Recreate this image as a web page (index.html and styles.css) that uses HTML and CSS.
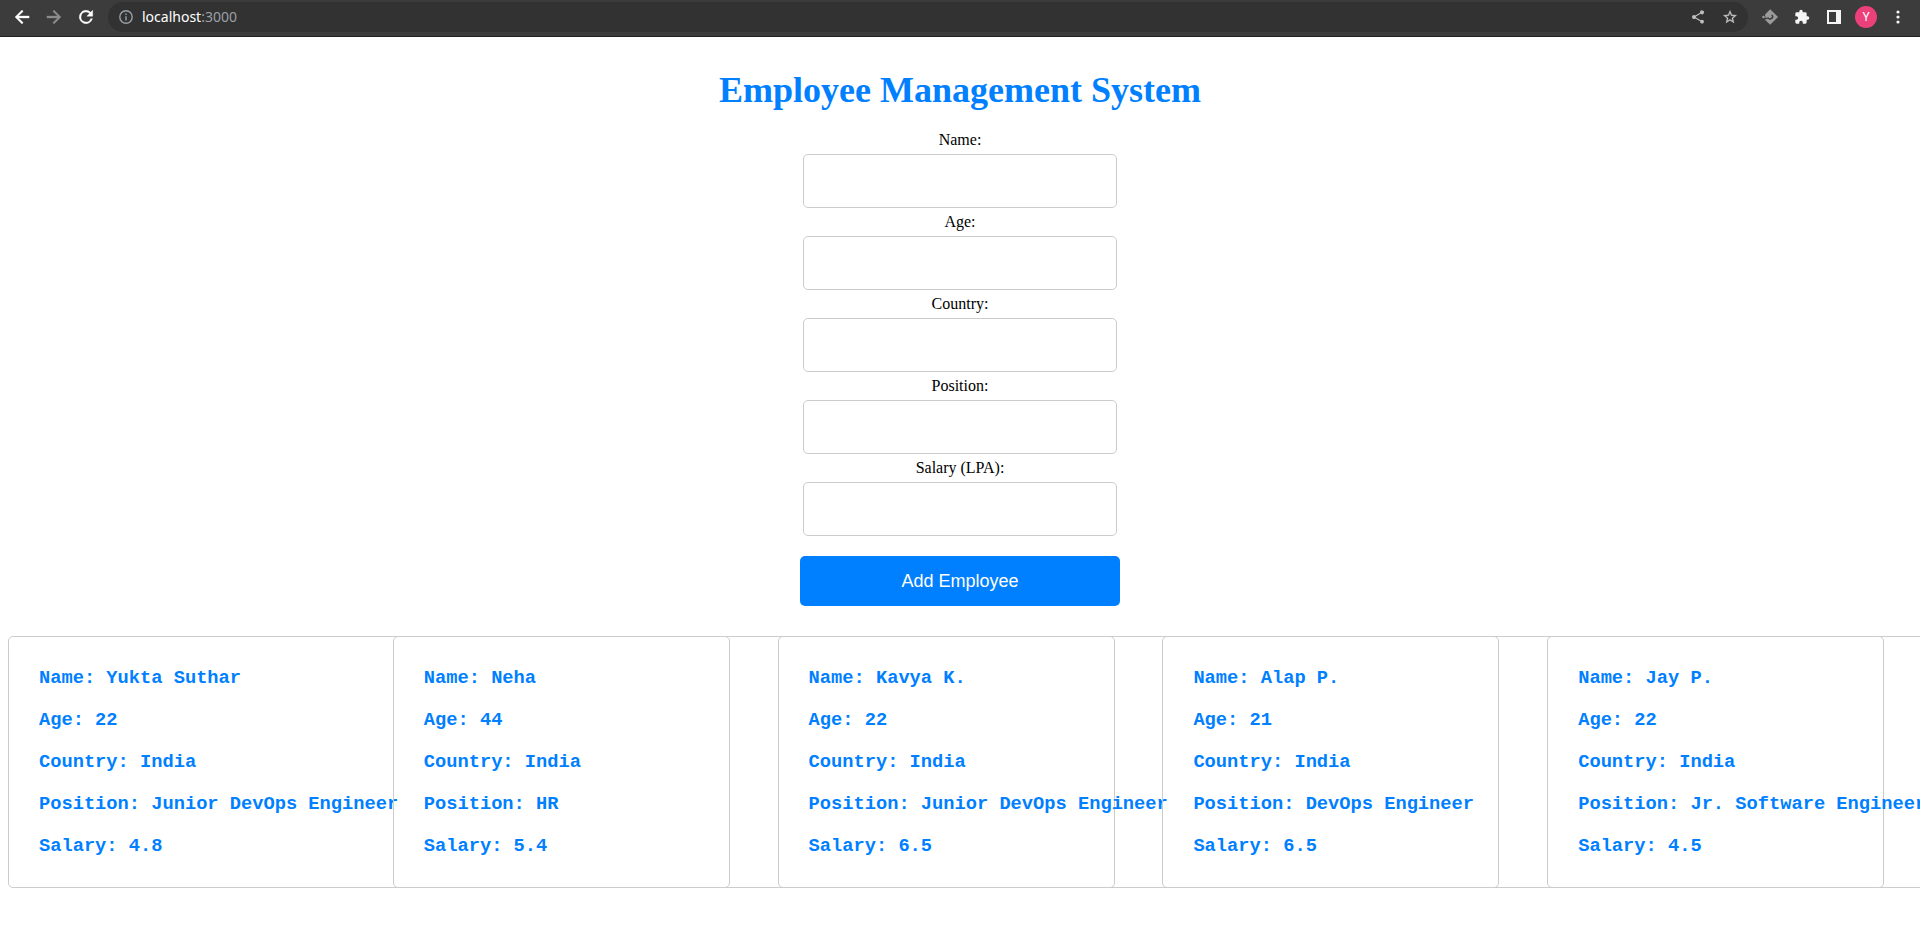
FILE: index.html
```html
<!DOCTYPE html>
<html lang="en">
<head>
<meta charset="utf-8">
<title>Employee Management System</title>
<link rel="stylesheet" href="styles.css">
</head>
<body>
<header class="toolbar">
  <button class="tool" aria-label="Back"><svg class="icon-lg" viewBox="0 0 24 24" fill="#fff"><path d="M20.500 10.800H7.800l5.600-5.500L12 3.600 3.600 12l8.400 8.400 1.400-1.700-5.600-5.500h12.700z" stroke="#fff" stroke-width=".4"/></svg></button>
  <button class="tool" aria-label="Forward"><svg class="icon-lg" viewBox="0 0 24 24" fill="#8c8c8c"><path d="M3.500 10.800h12.700l-5.600-5.500L12 3.600l8.400 8.400-8.400 8.400-1.400-1.700 5.600-5.500H3.500z" stroke="#8c8c8c" stroke-width=".4"/></svg></button>
  <button class="tool" aria-label="Reload"><svg class="icon-lg" viewBox="0 0 24 24" fill="#fff"><path d="M17.650 6.350A8 8 0 1 0 19.730 14h-2.080A6 6 0 1 1 12 6c1.660 0 3.140.69 4.220 1.780L13 11h7V4z" stroke="#fff" stroke-width=".5"/></svg></button>
  <div class="address">
    <svg class="icon-sm" viewBox="0 0 14 14" fill="none" stroke="#9aa0a6" stroke-width="1.400"><circle cx="7" cy="7" r="6.200"/><path d="M7 6.200v4.200M7 3.500v1.500"/></svg>
    <div class="url"><span class="host">localhost</span>:3000</div>
    <button class="tool" aria-label="Share"><svg class="icon-md" viewBox="0 0 24 24" fill="#bdbdbd"><path d="M18 16.080c-.76 0-1.440.3-1.960.77L8.910 12.700c.05-.23.09-.46.09-.7s-.04-.47-.09-.7l7.050-4.110A3 3 0 1 0 15 5c0 .24.04.47.09.7L8.040 9.810a3 3 0 1 0 0 4.380l7.120 4.160a2.920 2.920 0 1 0 2.840-2.270z"/></svg></button>
    <button class="tool" aria-label="Bookmark"><svg class="icon-md" viewBox="0 0 24 24" fill="#c4c4c4"><path d="M22 9.240l-7.190-.62L12 2 9.190 8.630 2 9.240l5.460 4.730L5.820 21 12 17.270 18.180 21l-1.630-7.030zM12 15.400l-3.760 2.270 1-4.280-3.320-2.880 4.380-.38L12 6.100l1.710 4.040 4.380.38-3.320 2.880 1 4.280z" stroke="#c4c4c4" stroke-width=".4"/></svg></button>
  </div>
  <button class="tool" aria-label="Extension"><svg class="icon-md" viewBox="0 0 16 16"><path fill="#9b9b9b" d="M8.200.2 16 8l-7.800 7.800L3 10.800V5.400z"/><path fill="none" stroke="#3c3c3c" stroke-width="1.500" d="M2.600 9.400h2.800M5.800 8.400c.4 1.300 1.400 1.700 2.500 1.500 1.600-.2 2.400-1.100 2.400-2.300 0-.8-.5-1.300-1.300-1.300M2.600 6.700v2.800"/><circle cx="1.500" cy="8" r="1.300" fill="#9b9b9b"/></svg></button>
  <button class="tool" aria-label="Extensions"><svg class="icon-md" viewBox="0 0 24 24" fill="#f5f5f5"><path d="M20.500 11H19V7a2 2 0 0 0-2-2h-4V3.500a2.500 2.500 0 0 0-5 0V5H4a2 2 0 0 0-2 2v3.800h1.500a2.700 2.700 0 0 1 0 5.400H2V20c0 1.100.9 2 2 2h3.800v-1.500a2.700 2.700 0 0 1 5.400 0V22H17a2 2 0 0 0 2-2v-4h1.500a2.500 2.500 0 0 0 0-5z"/></svg></button>
  <button class="tool" aria-label="Side panel"><svg class="icon-sm" viewBox="0 0 14 14"><path fill="#f5f5f5" fill-rule="evenodd" d="M0 0h14v14H0zM2 2v10h7V2z"/></svg></button>
  <button class="tool avatar" aria-label="Profile">Y</button>
  <button class="tool" aria-label="Menu"><svg class="icon-md" viewBox="0 0 16 16" fill="#f5f5f5"><circle cx="8" cy="3" r="1.600"/><circle cx="8" cy="8" r="1.600"/><circle cx="8" cy="13" r="1.600"/></svg></button>
</header>
<main class="page">
  <h1 class="title">Employee Management System</h1>
  <form class="form">
    <label class="label" for="name">Name:</label>
    <input class="field" id="name" type="text">
    <label class="label" for="age">Age:</label>
    <input class="field" id="age" type="text">
    <label class="label" for="country">Country:</label>
    <input class="field" id="country" type="text">
    <label class="label" for="position">Position:</label>
    <input class="field" id="position" type="text">
    <label class="label" for="salary">Salary (LPA):</label>
    <input class="field" id="salary" type="text">
    <button class="submit" type="button">Add Employee</button>
  </form>
  <section class="employees">
    <article class="card card-first">
      <h3 class="line">Name: Yukta Suthar</h3>
      <h3 class="line">Age: 22</h3>
      <h3 class="line">Country: India</h3>
      <h3 class="line">Position: Junior DevOps Engineer</h3>
      <h3 class="line">Salary: 4.8</h3>
    </article>
    <article class="card">
      <h3 class="line">Name: Neha</h3>
      <h3 class="line">Age: 44</h3>
      <h3 class="line">Country: India</h3>
      <h3 class="line">Position: HR</h3>
      <h3 class="line">Salary: 5.4</h3>
    </article>
    <article class="card">
      <h3 class="line">Name: Kavya K.</h3>
      <h3 class="line">Age: 22</h3>
      <h3 class="line">Country: India</h3>
      <h3 class="line">Position: Junior DevOps Engineer</h3>
      <h3 class="line">Salary: 6.5</h3>
    </article>
    <article class="card">
      <h3 class="line">Name: Alap P.</h3>
      <h3 class="line">Age: 21</h3>
      <h3 class="line">Country: India</h3>
      <h3 class="line">Position: DevOps Engineer</h3>
      <h3 class="line">Salary: 6.5</h3>
    </article>
    <article class="card">
      <h3 class="line">Name: Jay P.</h3>
      <h3 class="line">Age: 22</h3>
      <h3 class="line">Country: India</h3>
      <h3 class="line">Position: Jr. Software Engineer</h3>
      <h3 class="line">Salary: 4.5</h3>
    </article>
  </section>
</main>
</body>
</html>
```
FILE: styles.css
```css
* {
  box-sizing: border-box;
}

body {
  margin: 0;
  background: #fff;
  color: #000;
  font-family: "Liberation Serif", serif;
  font-size: 16px;
}

.toolbar {
  display: flex;
  align-items: center;
  height: 37px;
  padding: 0 6px 2px;
  background: #3c3c3c;
  border-bottom: 1px solid #202124;
}

.tool {
  display: flex;
  align-items: center;
  justify-content: center;
  flex: none;
  width: 32px;
  height: 30px;
  padding: 0;
  border: 0;
  background: none;
}

.icon-lg {
  width: 20px;
  height: 20px;
}

.icon-md {
  width: 16px;
  height: 16px;
}

.icon-sm {
  flex: none;
  width: 14px;
  height: 14px;
}

.address {
  display: flex;
  align-items: center;
  flex: 1;
  height: 30px;
  margin: 0 6px;
  padding: 0 2px 0 11px;
  border-radius: 15px;
  background: #323232;
}

.url {
  flex: 1;
  padding-left: 9px;
  color: #9aa0a6;
  font-family: "Noto Sans", sans-serif;
  font-size: 14px;
  line-height: 20px;
}

.host {
  color: #fff;
}

.avatar {
  width: 22px;
  height: 22px;
  margin: 0 5px;
  border-radius: 50%;
  background: #ec407a;
  color: #fff;
  font-family: Roboto, sans-serif;
  font-size: 12px;
}

.page {
  padding: 32px 0 30px 8px;
  overflow: hidden;
}

.title {
  margin: 0 8px 20px 0;
  color: #0080ff;
  font-size: 36px;
  line-height: 42px;
  text-align: center;
}

.form {
  display: flex;
  flex-direction: column;
  align-items: center;
  margin: 0 8px 30px 0;
}

.label {
  line-height: 18px;
}

.field {
  width: 314px;
  height: 54px;
  margin: 5px 0;
  padding: 10px;
  border: 1px solid #ccc;
  border-radius: 5px;
  background: #fff;
  font-size: 16px;
}

.submit {
  width: 320px;
  height: 50px;
  margin-top: 15px;
  border: 0;
  border-radius: 5px;
  background: #0080ff;
  color: #fff;
  font-family: "Liberation Sans", sans-serif;
  font-size: 18px;
}

.employees {
  display: grid;
  grid-template-columns: repeat(5, 1fr);
  width: calc(100% + 12px);
}

.card {
  display: flex;
  flex-direction: column;
  gap: 20px;
  width: 337px;
  padding: 30px;
  border: 1px solid #ccc;
  border-radius: 5px;
  grid-row: 1;
}

.card-first {
  grid-column: 1 / -1;
  width: auto;
}

.card:nth-child(2) {
  grid-column: 2;
}

.card:nth-child(3) {
  grid-column: 3;
}

.card:nth-child(4) {
  grid-column: 4;
}

.card:nth-child(5) {
  grid-column: 5;
}

.line {
  margin: 0;
  color: #0080ff;
  font-family: "Liberation Mono", monospace;
  line-height: 22px;
  white-space: nowrap;
}
```
